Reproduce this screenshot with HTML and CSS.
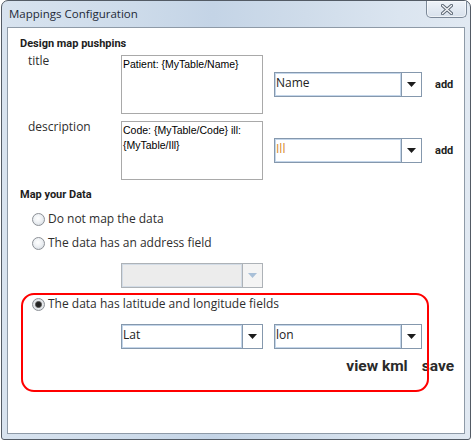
FILE: index.html
```html
<!DOCTYPE html>
<html lang="en">
<head>
<meta charset="utf-8">
<title>Mappings Configuration</title>
<link rel="stylesheet" href="styles.css">
</head>
<body>
<div class="window">
  <div class="titlebar">
    <span class="title">Mappings Configuration</span>
    <div class="close" aria-label="Close">
      <svg width="12" height="11" viewBox="0 0 12 11"><path d="M1.5 1.5L10.5 9.5M10.5 1.5L1.5 9.5" stroke="#5b6673" stroke-width="3.2" stroke-linecap="round" fill="none"/><path d="M1.5 1.5L10.5 9.5M10.5 1.5L1.5 9.5" stroke="#f5f7fa" stroke-width="1.3" stroke-linecap="round" fill="none"/></svg>
    </div>
  </div>
  <div class="client">
    <h2 class="heading">Design map pushpins</h2>
    <div class="pin-rows">
      <div class="pin-row">
        <span class="pin-label">title</span>
        <div class="textbox">Patient: {MyTable/Name}</div>
        <div class="combo">
          <span class="combo-value">Name</span>
          <span class="combo-btn"><svg width="9" height="5" viewBox="0 0 9 5"><path d="M0 0H9L4.5 5Z" fill="#1c1c1c"/></svg></span>
        </div>
        <span class="add">add</span>
      </div>
      <div class="pin-row">
        <span class="pin-label">description</span>
        <div class="textbox">Code: {MyTable/Code} ill: {MyTable/Ill}</div>
        <div class="combo">
          <span class="combo-value value-orange">Ill</span>
          <span class="combo-btn"><svg width="9" height="5" viewBox="0 0 9 5"><path d="M0 0H9L4.5 5Z" fill="#1c1c1c"/></svg></span>
        </div>
        <span class="add">add</span>
      </div>
    </div>

    <h2 class="heading heading-map">Map your Data</h2>
    <div class="radio-row first"><span class="radio"></span><span>Do not map the data</span></div>
    <div class="radio-row"><span class="radio"></span><span>The data has an address field</span></div>
    <div class="combo-row">
      <div class="combo narrow disabled">
        <span class="combo-value"></span>
        <span class="combo-btn"><svg width="9" height="5" viewBox="0 0 9 5"><path d="M0 0H9L4.5 5Z" fill="#a9c0d8"/></svg></span>
      </div>
    </div>
    <div class="radio-row"><span class="radio checked"></span><span>The data has latitude and longitude fields</span></div>
    <div class="combo-row">
      <div class="combo narrow">
        <span class="combo-value">Lat</span>
        <span class="combo-btn"><svg width="9" height="5" viewBox="0 0 9 5"><path d="M0 0H9L4.5 5Z" fill="#1c1c1c"/></svg></span>
      </div>
      <div class="combo">
        <span class="combo-value">lon</span>
        <span class="combo-btn"><svg width="9" height="5" viewBox="0 0 9 5"><path d="M0 0H9L4.5 5Z" fill="#1c1c1c"/></svg></span>
      </div>
    </div>
    <div class="actions"><span>view kml</span><span>save</span></div>
    <div class="annotation"></div>
  </div>
</div>
</body>
</html>
```

FILE: styles.css
```css
html, body {
  margin: 0;
  padding: 0;
  background: #ffffff;
}

body {
  width: 474px;
  height: 442px;
  overflow: hidden;
  font-family: "Open Sans", "Noto Sans", sans-serif;
}

.window {
  box-sizing: border-box;
  width: 470px;
  height: 440px;
  margin-left: 1px;
  border: 1px solid #535b65;
  border-radius: 7px 7px 3px 3px;
  background: linear-gradient(90deg, #d8e3ef 0%, #cddbea 28%, #c4d4e6 45%, #cfdcea 65%, #dbe5f0 85%, #e1e9f2 100%);
  display: flex;
  flex-direction: column;
  padding: 0 5px 5px;
}

.titlebar {
  height: 26px;
  flex-shrink: 0;
  display: flex;
  align-items: flex-start;
  margin: 0 -5px;
  padding: 0 3px 0 7px;
}

.title {
  font-size: 11.5px;
  line-height: 16px;
  padding-top: 5px;
  color: #1e2a38;
}

.close {
  box-sizing: border-box;
  width: 41px;
  height: 17px;
  margin-left: auto;
  border: 1px solid #7b8898;
  border-top: none;
  border-radius: 0 0 5px 5px;
  background: linear-gradient(#eef3f9, #d8e1ec);
  box-shadow: inset 0 0 0 1px rgba(255, 255, 255, 0.55);
  display: flex;
  align-items: center;
  justify-content: center;
}

.client {
  flex: 1;
  position: relative;
  background: #ffffff;
  border: 1px solid #8e9aa7;
  padding: 8px 0 0 12px;
}

.heading {
  margin: 0;
  font-family: Roboto, sans-serif;
  font-weight: 700;
  font-size: 11px;
  line-height: 15px;
  color: #1d1d1d;
}

.pin-rows {
  margin-top: 4px;
  display: flex;
  flex-direction: column;
  gap: 7px;
}

.pin-row {
  display: flex;
  align-items: center;
  height: 59px;
  padding-left: 8px;
}

.pin-label {
  align-self: flex-start;
  width: 93px;
  flex-shrink: 0;
  margin-top: -2px;
  font-size: 12px;
  line-height: 16px;
  color: #2e2e2e;
}

.textbox {
  box-sizing: border-box;
  width: 142px;
  height: 59px;
  flex-shrink: 0;
  border: 1px solid #a9a9a9;
  padding: 1px;
  font-family: "Liberation Sans", Arial, sans-serif;
  font-size: 10.5px;
  line-height: 15px;
  color: #000000;
}

.combo {
  box-sizing: border-box;
  width: 148px;
  height: 25px;
  flex-shrink: 0;
  display: flex;
  border: 1px solid #8598ad;
  background: #ffffff;
  margin-left: 11px;
}

.combo.narrow {
  width: 142px;
}

.combo-row .combo:first-child {
  margin-left: 0;
}

.combo-value {
  flex: 1;
  border: 1px solid #c4d6ea;
  padding: 1px 0 0 0;
  font-size: 12px;
  line-height: 16px;
  color: #222222;
}

.value-orange {
  color: #d6892c;
}

.combo-btn {
  width: 19px;
  border-left: 1px solid #8598ad;
  display: flex;
  align-items: center;
  justify-content: center;
}

.combo.disabled {
  border-color: #adb2b7;
}

.combo.disabled .combo-value {
  background: #ececec;
  border-color: #d3dce6;
}

.combo.disabled .combo-btn {
  background: #f4f4f4;
  border-left-color: #adb2b7;
}

.add {
  margin-left: 13px;
  font-family: Roboto, sans-serif;
  font-weight: 700;
  font-size: 11px;
  color: #222222;
}

.heading-map {
  margin-top: 7px;
}

.radio-row {
  display: flex;
  align-items: flex-start;
  margin-top: 8px;
  font-size: 12px;
  line-height: 16px;
  color: #2e2e2e;
}

.radio-row.first {
  margin-top: 9px;
}

.radio {
  box-sizing: border-box;
  width: 13px;
  height: 13px;
  margin: 2px 3px 0 12px;
  border-radius: 50%;
  border: 1px solid #8c9096;
  background: radial-gradient(circle at 45% 40%, #ffffff 0%, #eef1f4 45%, #cdd4dc 100%);
}

.radio.checked {
  background: radial-gradient(circle at 50% 50%, #1e1e1e 0, #2a2a2a 2.4px, #777777 3.2px, #e6e9ec 3.9px, #d2d8de 100%);
}

.combo-row {
  display: flex;
  margin-top: 12px;
  padding-left: 101px;
}

.actions {
  display: flex;
  justify-content: flex-end;
  gap: 14px;
  margin-top: 8px;
  padding-right: 10px;
  font-family: Roboto, sans-serif;
  font-weight: 700;
  font-size: 15.5px;
  line-height: 18px;
  color: #2a2a2a;
}

.annotation {
  position: absolute;
  left: 13px;
  top: 265px;
  box-sizing: border-box;
  width: 408px;
  height: 99px;
  border: 2px solid #ff0000;
  border-radius: 13px;
}
```
